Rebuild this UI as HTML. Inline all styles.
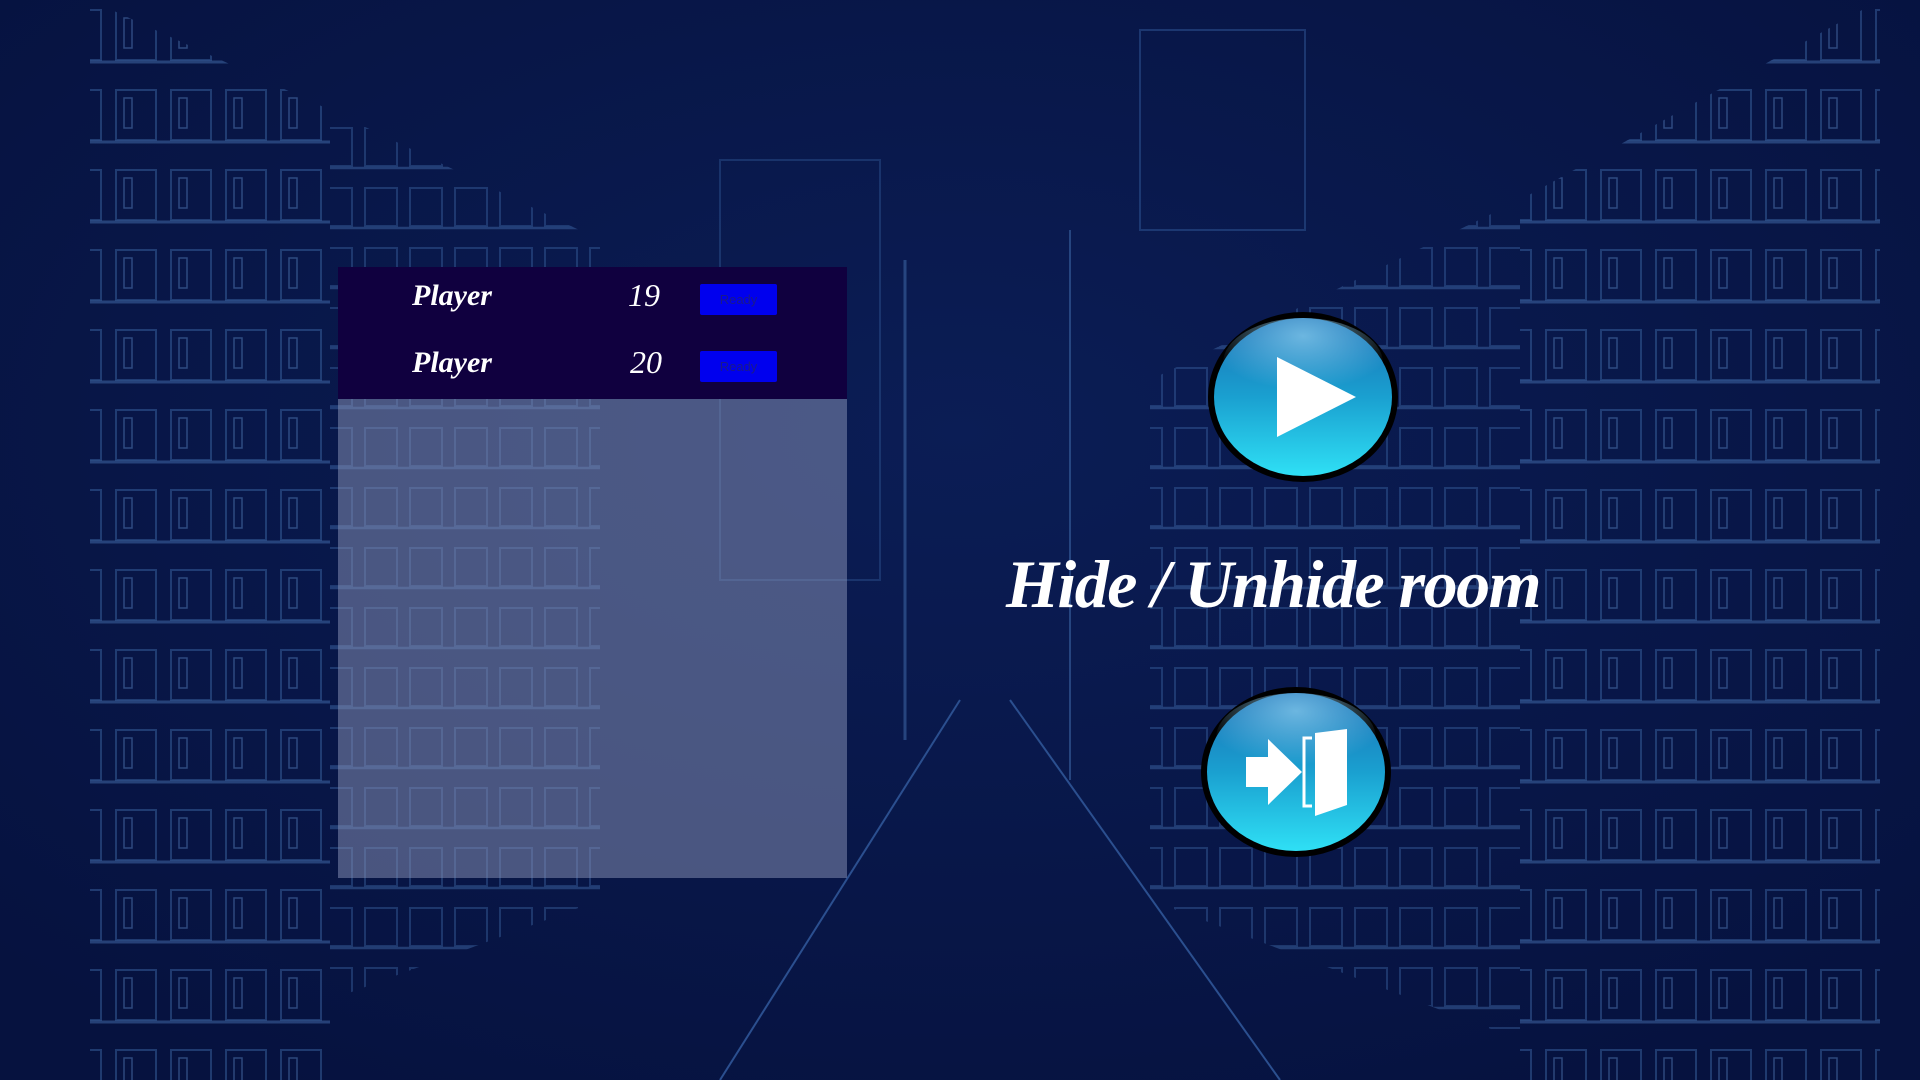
<!DOCTYPE html>
<html><head><meta charset="utf-8"><style>
html,body{margin:0;padding:0;width:1920px;height:1080px;overflow:hidden;background:#071445;font-family:"Liberation Sans",sans-serif}
.bg{position:absolute;left:0;top:0;width:1920px;height:1080px}
.panel{position:absolute;left:338px;top:267px;width:509px;height:611px;background:rgba(140,150,185,0.5)}
.dark{position:absolute;left:0;top:0;width:509px;height:132px;background:#10003f}
.name{position:absolute;color:#fff;font-family:"Liberation Serif",serif;font-style:italic;font-weight:bold;font-size:30px;left:74px}
.num{position:absolute;color:#fff;font-family:"Liberation Serif",serif;font-style:italic;font-size:32px}
.rdy{position:absolute;left:362px;width:77px;height:31px;background:#0000ee;border-radius:2px;color:#1a1a8a;font-size:13px;text-align:center;line-height:31px}
.title{position:absolute;left:1006px;top:545px;width:560px;color:#fff;font-family:"Liberation Serif",serif;font-style:italic;font-weight:bold;font-size:68px;white-space:nowrap;letter-spacing:-1.5px}
</style></head><body>
<svg class="bg" viewBox="0 0 1920 1080">
<defs>
<radialGradient id="g" cx="0.5" cy="0.4" r="0.7"><stop offset="0" stop-color="#0b1d55"/><stop offset="1" stop-color="#06123f"/></radialGradient>
<pattern id="win" width="55" height="80" patternUnits="userSpaceOnUse">
<rect x="6" y="10" width="40" height="50" fill="none" stroke="#3e6aa8" stroke-width="2" opacity="0.45"/>
<line x1="0" y1="62" x2="55" y2="62" stroke="#4a78b8" stroke-width="3" opacity="0.45"/>
<rect x="14" y="18" width="8" height="30" fill="none" stroke="#5b88c5" stroke-width="1.5" opacity="0.45"/>
</pattern>
<pattern id="win2" width="45" height="60" patternUnits="userSpaceOnUse">
<rect x="5" y="8" width="32" height="38" fill="none" stroke="#3e6aa8" stroke-width="2" opacity="0.4"/>
<line x1="0" y1="48" x2="45" y2="48" stroke="#4a78b8" stroke-width="2.5" opacity="0.4"/>
</pattern>
</defs>
<rect width="1920" height="1080" fill="url(#g)"/>
<polygon points="90,0 330,110 330,1080 90,1080" fill="url(#win)"/>
<polygon points="330,110 600,240 600,900 330,1000" fill="url(#win2)"/>
<polygon points="1880,0 1520,200 1520,1080 1880,1080" fill="url(#win)"/>
<polygon points="1520,200 1150,380 1150,900 1520,1040" fill="url(#win2)"/>
<rect x="1140" y="30" width="165" height="200" fill="none" stroke="#2a4d8a" stroke-width="2" opacity="0.6"/>
<rect x="720" y="160" width="160" height="420" fill="none" stroke="#2a4d8a" stroke-width="2" opacity="0.5"/>
<line x1="960" y1="700" x2="720" y2="1080" stroke="#2b4f8f" stroke-width="2"/>
<line x1="1010" y1="700" x2="1280" y2="1080" stroke="#2b4f8f" stroke-width="2"/>
<line x1="1070" y1="230" x2="1070" y2="780" stroke="#3a62a0" stroke-width="2" opacity="0.6"/>
<line x1="905" y1="260" x2="905" y2="740" stroke="#3a62a0" stroke-width="3" opacity="0.6"/>
</svg>

<div class="panel">
<div class="dark">
<div class="name" style="top:12px">Player</div>
<div class="num" style="left:290px;top:10px">19</div>
<div class="rdy" style="top:17px">Ready</div>
<div class="name" style="top:79px">Player</div>
<div class="num" style="left:292px;top:77px">20</div>
<div class="rdy" style="top:84px">Ready</div>
</div>
</div>

<svg style="position:absolute;left:0;top:0" width="1920" height="1080">
<defs>
<linearGradient id="b" x1="0" y1="0" x2="0" y2="1"><stop offset="0" stop-color="#1a6fb5"/><stop offset="0.5" stop-color="#1aa0d0"/><stop offset="1" stop-color="#2fe0f5"/></linearGradient>
<radialGradient id="sh" cx="0.5" cy="0.2" r="0.6"><stop offset="0" stop-color="#8fd0f0" stop-opacity="0.7"/><stop offset="1" stop-color="#8fd0f0" stop-opacity="0"/></radialGradient>
</defs>
<ellipse cx="1303" cy="397" rx="95" ry="85" fill="#000"/>
<ellipse cx="1303" cy="397" rx="89" ry="79" fill="url(#b)"/>
<ellipse cx="1303" cy="363" rx="80" ry="45" fill="url(#sh)"/>
<polygon points="1277,357 1277,437 1356,397" fill="#fff"/>
<ellipse cx="1296" cy="772" rx="95" ry="85" fill="#000"/>
<ellipse cx="1296" cy="772" rx="89" ry="79" fill="url(#b)"/>
<ellipse cx="1296" cy="738" rx="80" ry="45" fill="url(#sh)"/>
<path d="M1246 757 h22 v-18 l34 33 -34 33 v-18 h-22 z" fill="#fff"/>
<path d="M1312 738 h-8 v68 h8" fill="none" stroke="#fff" stroke-width="3"/>
<polygon points="1315,733 1347,729 1347,805 1315,816" fill="#fff"/>
</svg>

<div class="title">Hide / Unhide room</div>
</body></html>
